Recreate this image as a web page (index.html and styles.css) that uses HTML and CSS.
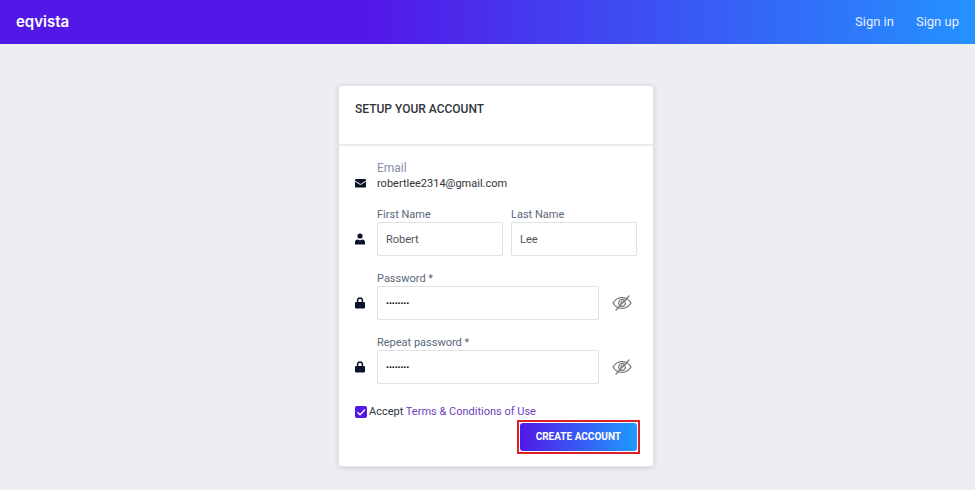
FILE: index.html
```html
<!DOCTYPE html>
<html lang="en">

<head>
    <meta charset="utf-8">
    <meta name="viewport" content="width=device-width, initial-scale=1">
    <title>Setup your account - eqvista</title>
    <link rel="stylesheet" href="styles.css">
</head>

<body>
    <svg class="sprite" aria-hidden="true">
        <symbol id="icon-lock" viewBox="0 0 10 12">
            <path d="M2.6 5.5V3.4a2.4 2.4 0 0 1 4.8 0v2.1" fill="none" stroke="currentColor" stroke-width="1.5" />
            <rect x="0" y="5" width="10" height="6.5" rx="1" fill="currentColor" />
        </symbol>
        <symbol id="icon-eye" viewBox="0 0 20 16">
            <g fill="none" stroke="currentColor" stroke-width="1.2" stroke-linecap="round">
                <path d="M1 8c2.2-3.6 5.3-5.3 9-5.3S16.8 4.4 19 8c-2.2 3.6-5.3 5.3-9 5.3S3.2 11.6 1 8z" />
                <circle cx="10" cy="8" r="3.3" />
                <path d="M8.8 8.3a1.3 1.3 0 0 1 1.4-1.4" />
                <path d="M17 1L4 15" />
            </g>
        </symbol>
    </svg>

    <header class="navbar">
        <a class="logo" href="#">eqvista</a>
        <nav class="nav-links">
            <a href="#">Sign in</a>
            <a href="#">Sign up</a>
        </nav>
    </header>

    <main class="page">
        <form class="card">
            <h1 class="card-title">SETUP YOUR ACCOUNT</h1>
            <div class="card-body">
                <div class="row email">
                    <svg class="icon" viewBox="0 0 11 12" aria-hidden="true">
                        <rect x="0" y="2" width="11" height="8.5" rx="1" fill="currentColor" />
                        <path d="M0 4l4.5 3q1 .6 2 0L11 4" fill="none" stroke="#fff" stroke-width="1" />
                    </svg>
                    <div class="field">
                        <span class="email-label">Email</span>
                        <span class="email-value">robertlee2314@gmail.com</span>
                    </div>
                </div>

                <div class="row">
                    <svg class="icon" viewBox="0 0 10 12" aria-hidden="true">
                        <circle cx="5" cy="3" r="2.6" fill="currentColor" />
                        <path d="M0 11.5V9.4q0-2.6 2.6-2.9Q5 7.8 7.4 6.5 10 6.8 10 9.4v2.1z" fill="currentColor" />
                    </svg>
                    <div class="field">
                        <label for="first-name">First Name</label>
                        <input id="first-name" type="text" value="Robert">
                    </div>
                    <div class="field">
                        <label for="last-name">Last Name</label>
                        <input id="last-name" type="text" value="Lee">
                    </div>
                </div>

                <div class="row">
                    <svg class="icon" aria-hidden="true"><use href="#icon-lock" /></svg>
                    <div class="field">
                        <label for="password">Password *</label>
                        <input id="password" type="password" value="password">
                    </div>
                    <button class="toggle" type="button" aria-label="Show password">
                        <svg aria-hidden="true"><use href="#icon-eye" /></svg>
                    </button>
                </div>

                <div class="row">
                    <svg class="icon" aria-hidden="true"><use href="#icon-lock" /></svg>
                    <div class="field">
                        <label for="repeat">Repeat password *</label>
                        <input id="repeat" type="password" value="password">
                    </div>
                    <button class="toggle" type="button" aria-label="Show repeated password">
                        <svg aria-hidden="true"><use href="#icon-eye" /></svg>
                    </button>
                </div>

                <div class="terms">
                    <span class="check">
                        <input id="terms" type="checkbox" checked>
                        <svg viewBox="0 0 12 12" aria-hidden="true">
                            <path d="M2.5 6.2l2.5 2.5 5-5.2" fill="none" stroke="#fff" stroke-width="1.3" />
                        </svg>
                    </span>
                    <label for="terms">Accept <a href="#">Terms &amp; Conditions of Use</a></label>
                </div>

                <div class="highlight">
                    <button class="submit" type="submit">CREATE ACCOUNT</button>
                </div>
            </div>
        </form>
    </main>
</body>

</html>
```

FILE: styles.css
```css
* {
    margin: 0;
    padding: 0;
    box-sizing: border-box;
}

body {
    min-height: 100vh;
    background: #edeef2;
    color: #30343b;
    font: 11px/16px Roboto, "Liberation Sans", sans-serif;
}

a {
    text-decoration: none;
}

.sprite {
    display: none;
}

.navbar {
    display: flex;
    align-items: center;
    justify-content: space-between;
    height: 44px;
    padding: 0 16px;
    background: linear-gradient(to right, #5218e8 38%, #2492ff);
}

.logo {
    color: #fff;
    font: 600 15px/20px Inter, sans-serif;
}

.nav-links {
    display: flex;
    gap: 22px;
}

.nav-links a {
    color: #e8efff;
    font-size: 13px;
}

.page {
    display: flex;
    justify-content: center;
    padding: 41px 0 24px 17px;
}

.card {
    width: 100%;
    max-width: 316px;
    background: #fff;
    border: 1px solid #e0e3e8;
    border-radius: 4px;
    box-shadow: 0 1px 4px rgba(60, 75, 110, .2);
}

.card-title {
    padding: 15px 16px 27px;
    border-bottom: 2px solid #ebebed;
    font-size: 12px;
    font-weight: 500;
    line-height: 16px;
}

.card-body {
    display: flex;
    flex-direction: column;
    padding: 14px 16px;
}

.row {
    display: flex;
    align-items: flex-end;
    gap: 8px;
    margin-bottom: 15px;
}

.icon {
    flex: none;
    width: 10px;
    height: 12px;
    margin: 0 4px 11px 0;
    color: #0b1328;
}

.field {
    display: flex;
    flex: 1;
    flex-direction: column;
    min-width: 0;
}

.field label {
    color: #596878;
    line-height: 15px;
}

.email .icon {
    width: 11px;
    margin: 0 3px 3px 0;
}

.email-label {
    color: #8390a8;
    font-size: 12px;
}

.field input {
    width: 100%;
    height: 34px;
    padding: 0 8px;
    border: 1px solid #dfe1e3;
    border-radius: 2px;
    background: #fff;
    color: #50545b;
    font: inherit;
}

.field input[type="password"] {
    color: #10151f;
    font-size: 8px;
    font-weight: 700;
}

.toggle {
    display: flex;
    justify-content: center;
    width: 30px;
    margin-bottom: 9px;
    border: none;
    background: none;
    color: #74777e;
}

.toggle svg {
    width: 20px;
    height: 16px;
}

.terms {
    display: flex;
    align-items: center;
    gap: 2px;
    margin-top: 5px;
}

.terms a {
    color: #7040c0;
}

.check {
    position: relative;
    width: 12px;
    height: 12px;
}

.check input {
    display: block;
    width: 12px;
    height: 12px;
    border-radius: 2px;
    background: #5218e8;
    appearance: none;
}

.check svg {
    position: absolute;
    inset: 0;
    pointer-events: none;
}

.check input:not(:checked) + svg {
    display: none;
}

.highlight {
    align-self: flex-end;
    margin: 0 -3px -2px 0;
    padding: 1px;
    border: 2px solid #db2028;
}

.submit {
    display: block;
    height: 28px;
    padding: 0 16px;
    border: none;
    border-radius: 3px;
    background: linear-gradient(to right, #5218e8, #1e9bff);
    color: #fff;
    font: 700 10px/16px Roboto, sans-serif;
}
```
